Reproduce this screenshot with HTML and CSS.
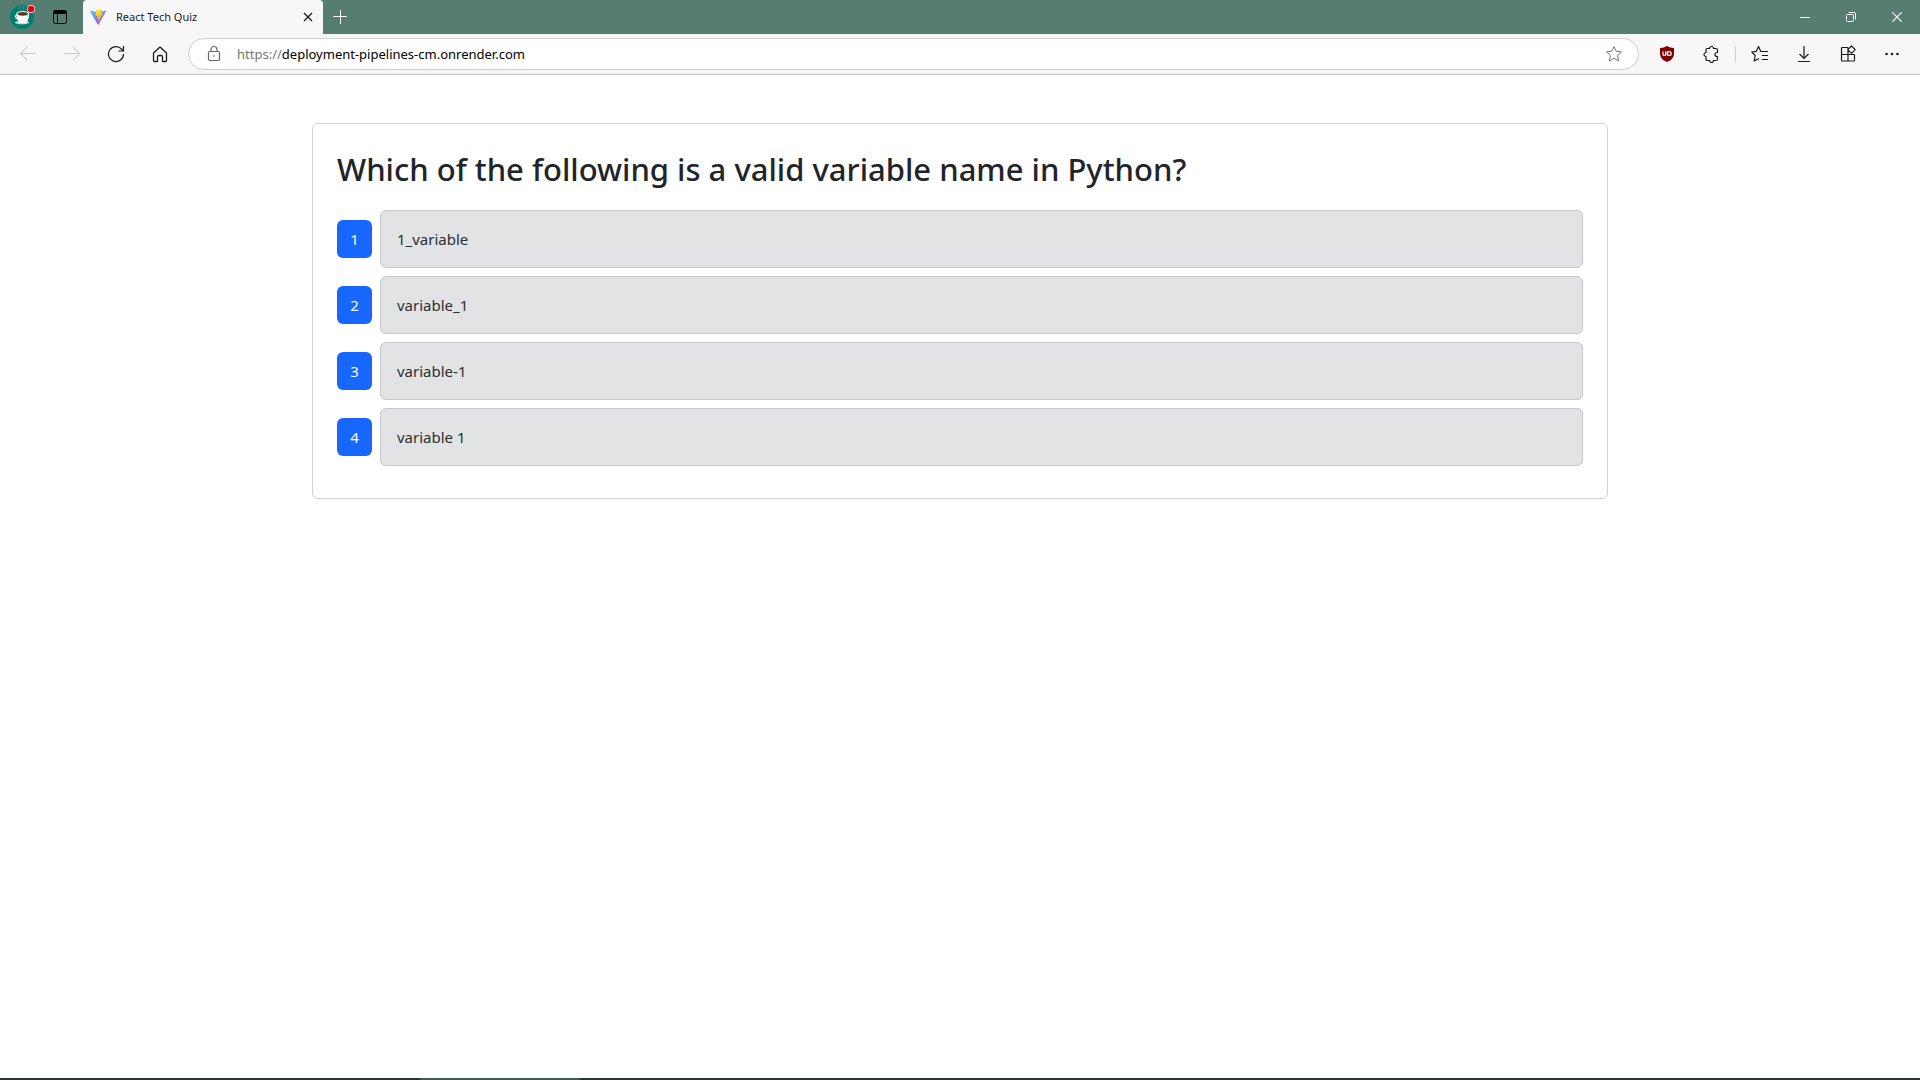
FILE: index.html
```html
<!DOCTYPE html>
<html lang="en">
<head>
<meta charset="utf-8">
<meta name="viewport" content="width=device-width, initial-scale=1">
<title>React Tech Quiz</title>
<link rel="stylesheet" href="styles.css">
</head>
<body>
<header class="browser">
  <div class="tab-strip">
    <button class="profile" aria-label="Profile">
      <svg width="28" height="34" viewBox="0 0 28 34">
        <circle cx="14" cy="17" r="12" fill="#007f70"/>
        <path d="M12 9q1-2 0-3M15 10q2-2 0-4" stroke="#3d9f94" fill="none"/>
        <ellipse cx="14" cy="22.500" rx="7" ry="1.800" fill="#c9dcd8"/>
        <path d="M9.500 15.500q-2.500-.5-2 1.500.5 2 3 2" stroke="#fff" stroke-width="1.300" fill="none"/>
        <path d="M8.500 13.500h12.500q0 7-3 9.500h-6q-3.500-2.500-3.500-9.500z" fill="#fff"/>
        <ellipse cx="14.750" cy="13.500" rx="6.250" ry="2.500" fill="#fff"/>
        <ellipse cx="14.750" cy="13.800" rx="5.200" ry="1.900" fill="#5b3926"/>
        <circle cx="23" cy="9" r="4" fill="#e6f1ee"/>
        <circle cx="23" cy="9" r="3.300" fill="#e8000d"/>
      </svg>
    </button>
    <button class="workspaces" aria-label="Tab actions">
      <svg width="16" height="16" viewBox="0 0 16 16" fill="none" stroke="#000">
        <rect x="1.500" y="1.500" width="13" height="13" rx="2"/>
        <path d="M1.500 3.500q0-2 2-2h9q2 0 2 2v1h-13z" fill="#000"/>
        <path d="M5.500 5v9.500"/>
      </svg>
    </button>
    <div class="tab">
      <svg width="16" height="16" viewBox="0 0 32 32">
        <defs>
          <linearGradient id="violet" x1="0" y1="0" x2=".6" y2="1"><stop stop-color="#41d1ff"/><stop offset="1" stop-color="#a93dff"/></linearGradient>
          <linearGradient id="bolt" x1=".4" y1="0" x2=".6" y2="1"><stop stop-color="#ffea83"/><stop offset=".1" stop-color="#ffdd35"/><stop offset="1" stop-color="#ffa800"/></linearGradient>
        </defs>
        <path d="M31.800 4.900 17 31.200a.8.8 0 0 1-1.400 0L.3 4.900a.8.800 0 0 1 .9-1.200l14.800 2.600h.3l14.600-2.600a.8.800 0 0 1 .9 1.200z" fill="url(#violet)"/>
        <path d="M23.200.1 12.300 2.200a.4.400 0 0 0-.3.400l-.7 11.300a.4.400 0 0 0 .5.400l3-.7a.4.400 0 0 1 .5.500l-.9 4.400a.4.400 0 0 0 .5.500l1.900-.6a.4.400 0 0 1 .5.500l-1.400 7c-.1.400.5.600.7.300l9-17.900a.4.400 0 0 0-.4-.6l-3.200.6a.4.400 0 0 1-.4-.5L23.700.6a.4.400 0 0 0-.5-.5z" fill="url(#bolt)"/>
      </svg>
      <span class="tab-title">React Tech Quiz</span>
      <button class="tab-close" aria-label="Close tab">
        <svg width="10" height="10" viewBox="0 0 10 10"><path d="m1 1 8 8m0-8L1 9" stroke="#1b1b1b" stroke-width="1.300"/></svg>
      </button>
    </div>
    <button class="new-tab" aria-label="New tab">
      <svg width="14" height="14" viewBox="0 0 14 14"><path d="M0 6.500h14M7.500 0v14" stroke="#fff"/></svg>
    </button>
    <div class="window-controls">
      <button aria-label="Minimize"><svg width="10" height="10" viewBox="0 0 10 10"><path d="M0 5.500h10" stroke="#fff"/></svg></button>
      <button aria-label="Restore"><svg width="10" height="10" viewBox="0 0 10 10" fill="none" stroke="#fff"><rect x=".5" y="2.500" width="7" height="7" rx="1"/><path d="M2.500.5H8Q9.500.5 9.500 2v5.500"/></svg></button>
      <button aria-label="Close"><svg width="10" height="10" viewBox="0 0 10 10"><path d="m0 0 10 10M10 0 0 10" stroke="#fff" stroke-width="1.200"/></svg></button>
    </div>
  </div>
  <div class="toolbar">
    <button class="tool" aria-label="Back" disabled><svg width="18" height="18" viewBox="0 0 18 18" fill="none" stroke="#c9c9c9"><path d="M17 8.500H1.500M8 2 1.500 8.500 8 15"/></svg></button>
    <button class="tool" aria-label="Forward" disabled><svg width="18" height="18" viewBox="0 0 18 18" fill="none" stroke="#c9c9c9"><path d="M1 8.500h15.500M10 2l6.500 6.500L10 15"/></svg></button>
    <button class="tool" aria-label="Refresh"><svg width="18" height="18" viewBox="0 0 18 18" fill="none" stroke="#1b1b1b" stroke-width="1.200"><path d="M16.500 9A7.500 7.500 0 1 1 14.500 4L16 5.500M16.500 1v5h-5"/></svg></button>
    <button class="tool" aria-label="Home"><svg width="18" height="18" viewBox="0 0 18 18" fill="none" stroke="#1b1b1b" stroke-width="1.300" stroke-linejoin="round"><path d="M2.500 8 9 2l6.500 6v7.500q0 1-1 1H12q-.5 0-.5-.5v-4q0-1.500-1.500-1.500H8Q6.500 10.500 6.500 12v4q0 .5-.5.500H3.500q-1 0-1-1z"/></svg></button>
    <div class="address">
      <svg width="18" height="18" viewBox="0 0 18 18" fill="none" stroke="#666" stroke-width="1.200"><rect x="3.500" y="6.500" width="11" height="9" rx="1.500"/><path d="M6 6.500V4.500a3 3 0 0 1 6 0v2"/><circle cx="9" cy="11" r=".8" fill="#666" stroke="none"/></svg>
      <a class="url" href="#"><span class="scheme">https://</span>deployment-pipelines-cm.onrender.com</a>
      <button class="favorite" aria-label="Add to favorites"><svg width="18" height="18" viewBox="0 0 18 18" fill="none" stroke="#767676" stroke-linejoin="round"><path d="m9 1.500 2.200 4.800 5.300.6-3.900 3.600 1 5.500L9 13.300 4.400 16l1-5.500L1.500 6.900l5.300-.6z"/></svg></button>
    </div>
    <button class="tool" aria-label="uBlock Origin"><svg width="16" height="16" viewBox="0 0 16 16"><path d="M8 0q3 2 7 2v6q0 5-7 8-7-3-7-8V2q4 0 7-2z" fill="#800000"/><path d="M4 5.500v2.700q0 1.300 1.300 1.300t1.300-1.300V5.500M8.300 5.500v4" fill="none" stroke="#fff" stroke-width="1.200"/><circle cx="10.300" cy="7.500" r="1.900" fill="none" stroke="#fff" stroke-width="1.200"/></svg></button>
    <button class="tool" aria-label="Extensions"><svg width="18" height="18" viewBox="0 0 18 18" fill="none" stroke="#1b1b1b" stroke-width="1.200" stroke-linejoin="round"><path d="M5 3.500h2.500a2 2 0 0 1 4 0H14q1.500 0 1.500 1.500v2.500H15a2 2 0 0 0 0 4h.5V14q0 1.500-1.500 1.500h-2.500a2 2 0 0 1-4 0H5q-1 0-1-1v-3a2 2 0 0 1 0-4v-3q0-1 1-1z"/></svg></button>
    <span class="divider"></span>
    <button class="tool" aria-label="Favorites"><svg width="18" height="18" viewBox="0 0 18 18" fill="none" stroke="#1b1b1b" stroke-width="1.200" stroke-linejoin="round"><path d="M11.500 6.500H9.800L7.500 1.500 5.300 6.300.8 7l3.400 3.500-1 5.500L8 13.500M11 6.500h6M11 10.500h6M11 14.500h6"/></svg></button>
    <button class="tool" aria-label="Downloads"><svg width="18" height="18" viewBox="0 0 18 18" fill="none" stroke="#1b1b1b" stroke-width="1.200"><path d="M9 1v12.500M4.500 9 9 13.500 13.500 9M3 16.500h12"/></svg></button>
    <button class="tool" aria-label="Apps"><svg width="18" height="18" viewBox="0 0 18 18" fill="none" stroke="#1b1b1b" stroke-width="1.200" stroke-linejoin="round"><path d="M9 2.500H3.500q-1 0-1 1V15q0 1 1 1h11q1 0 1-1V9.500M9 2.500V16M2.500 9.500h13M12.500 1l3.700 3.700-3.700 3.700-3.700-3.700z"/></svg></button>
    <button class="tool" aria-label="Settings and more"><svg width="18" height="18" viewBox="0 0 18 18" fill="#1b1b1b"><circle cx="3.500" cy="9" r="1.300"/><circle cx="9" cy="9" r="1.300"/><circle cx="14.500" cy="9" r="1.300"/></svg></button>
  </div>
</header>
<main class="container">
  <section class="card">
    <h2 class="question">Which of the following is a valid variable name in Python?</h2>
    <div class="answers">
      <div class="answer"><button class="choice" aria-describedby="a1">1</button><div class="option" id="a1">1_variable</div></div>
      <div class="answer"><button class="choice" aria-describedby="a2">2</button><div class="option" id="a2">variable_1</div></div>
      <div class="answer"><button class="choice" aria-describedby="a3">3</button><div class="option" id="a3">variable-1</div></div>
      <div class="answer"><button class="choice" aria-describedby="a4">4</button><div class="option" id="a4">variable 1</div></div>
    </div>
  </section>
</main>
<footer class="taskbar"><span class="taskbar-active"></span></footer>
</body>
</html>
```
FILE: styles.css
```css
*, *::before, *::after { box-sizing: border-box; }
body {
  margin: 0;
  min-height: 100vh;
  display: flex;
  flex-direction: column;
  background: #fff;
  color: #212529;
  font: 400 15px/24px "Noto Sans", "Open Sans", sans-serif;
}
button {
  margin: 0;
  padding: 0;
  border: 0;
  background: none;
  color: inherit;
  font: inherit;
}
svg { display: block; flex: none; }

.tab-strip {
  display: flex;
  height: 34px;
  padding-left: 8px;
  background: #557d72;
}
.profile, .workspaces, .new-tab, .tab-close, .favorite, .tool, .window-controls button {
  display: flex;
  align-items: center;
  justify-content: center;
}
.profile { width: 28px; }
.workspaces { width: 47px; }
.tab {
  display: flex;
  align-items: center;
  gap: 10px;
  width: 240px;
  padding: 0 7px;
  border-radius: 4px 4px 0 0;
  background: #f7f7f7;
}
.tab-title {
  flex: 1;
  color: #1b1b1b;
  font-size: 11px;
}
.tab-close { width: 16px; height: 16px; }
.new-tab { width: 34px; }
.window-controls { display: flex; margin-left: auto; }
.window-controls button { width: 46px; }

.toolbar {
  display: flex;
  align-items: center;
  height: 41px;
  padding: 0 6px;
  border-bottom: 1px solid #bcbcbc;
  background: #f7f7f7;
}
.tool { width: 44px; height: 32px; }
.address {
  flex: 1;
  display: flex;
  align-items: center;
  height: 32px;
  margin: 0 6px;
  padding: 0 15px 0 16px;
  border: 1px solid #cfcfcf;
  border-radius: 16px;
  background: #fff;
}
.url {
  flex: 1;
  margin-left: 14px;
  color: #000;
  font-size: 13px;
  text-decoration: none;
}
.scheme { color: #767676; }
.divider {
  width: 1px;
  height: 16px;
  margin: 0 2px;
  background: #cfcfcf;
}

.container {
  flex: 1;
  width: 100%;
  max-width: 1320px;
  margin: 0 auto;
  padding: 48px 12px;
}
.card {
  padding: 26px 24px 32px;
  border: 1px solid #d0d1d2;
  border-radius: 6px;
}
.question {
  margin: 0 0 22px;
  font-size: 31px;
  font-weight: 500;
  line-height: 38px;
}
.answers { display: flex; flex-direction: column; gap: 8px; }
.answer { display: flex; align-items: center; gap: 8px; }
.choice {
  width: 35px;
  height: 38px;
  border-radius: 6px;
  background: #1766fd;
  color: #fff;
}
.option {
  flex: 1;
  padding: 16px;
  border: 1px solid #c4c8cb;
  border-radius: 6px;
  background: #e2e3e5;
  color: #2b2f32;
}

.taskbar { height: 2px; padding-left: 420px; background: #2a3532; }
.taskbar-active {
  display: block;
  width: 160px;
  height: 2px;
  background: #3e5b53;
}
```
